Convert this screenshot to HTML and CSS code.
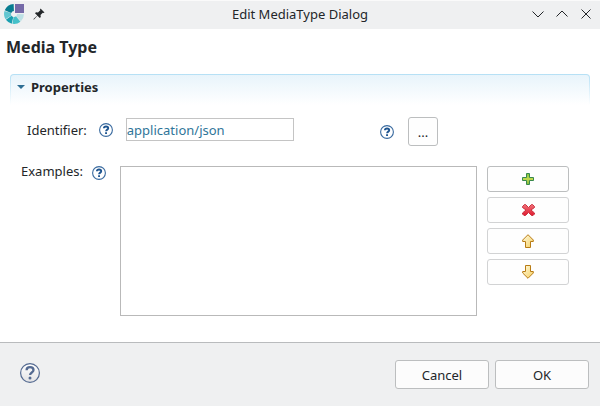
FILE: index.html
```html
<!DOCTYPE html>
<html lang="en">
<head>
<meta charset="utf-8">
<title>Edit MediaType Dialog</title>
<link rel="stylesheet" href="styles.css">
</head>
<body>
<svg class="defs" aria-hidden="true">
  <defs>
    <linearGradient id="green" x1="0" y1="0" x2="0" y2="1"><stop offset="0" stop-color="#7cc142"/><stop offset=".5" stop-color="#c3d94e"/><stop offset="1" stop-color="#7fb83c"/></linearGradient>
    <linearGradient id="red" x1="0" y1="0" x2="0" y2="1"><stop offset="0" stop-color="#f07078"/><stop offset="1" stop-color="#e01c30"/></linearGradient>
    <linearGradient id="gold" x1="0" y1="0" x2="1" y2="1"><stop offset="0" stop-color="#fffbe0"/><stop offset="1" stop-color="#f5cf62"/></linearGradient>
    <linearGradient id="disc" x1="0" y1="0" x2="0" y2="1"><stop offset="0" stop-color="#fff"/><stop offset="1" stop-color="#e2e2e4"/></linearGradient>
    <symbol id="help" viewBox="0 0 14 14">
      <circle cx="7" cy="7" r="6.4" fill="#fff" stroke="#396a9f" stroke-width="1.1"/>
      <path d="M4.9 5.2C5 3.9 6 3.5 7 3.5c1.300 0 2.200.7 2.200 1.700 0 1.500-2.100 1.400-2.100 3.100" fill="none" stroke="#1f5590" stroke-width="1.900"/>
      <path d="M6.100 9.300h1.900v1.800H6.100z" fill="#1f5590"/>
    </symbol>
  </defs>
</svg>
<div class="dialog">
  <header class="titlebar">
    <div class="title-left">
      <svg class="logo" width="22" height="22" viewBox="0 0 22 22" aria-hidden="true">
        <path d="M12 1h9v9h-9z" fill="#756aa8"/>
        <g fill="none" stroke-width="7">
          <path d="M17.500 11.200A6.500 6.500 0 0 1 15.500 15.700" stroke="#bce0e5"/>
          <path d="M15.200 16A6.500 6.500 0 0 1 10 17.400" stroke="#45c0c9"/>
          <path d="M9.500 17.300A6.500 6.500 0 0 1 5.700 14.800" stroke="#1a9fb0"/>
          <path d="M5.500 14.400A6.500 6.500 0 0 1 4.800 9" stroke="#62c6d1"/>
          <path d="M5 8.600A6.500 6.500 0 0 1 10.800 4.500" stroke="#087d91"/>
        </g>
      </svg>
      <svg width="12" height="12" viewBox="0 0 12 12" aria-hidden="true"><path d="M7.500.5l4 4-1 .5-.7-.2-2.300 2.300.3 2-1 1-2.400-2.400L1 11.500H.5V11l3.800-3.400L2 5.200l1-1 2 .3 2.300-2.300L7 1.500z" fill="#232629"/></svg>
    </div>
    <div class="title">Edit MediaType Dialog</div>
    <div class="window-buttons">
      <button aria-label="Minimize"><svg width="12" height="12" viewBox="0 0 12 12"><path d="M.5 3.500L6 9l5.500-5.500"/></svg></button>
      <button aria-label="Maximize"><svg width="12" height="12" viewBox="0 0 12 12"><path d="M.5 8.500L6 3l5.500 5.500"/></svg></button>
      <button aria-label="Close"><svg width="12" height="12" viewBox="0 0 12 12"><path d="M1.500 1.500l9 9M10.500 1.500l-9 9"/></svg></button>
    </div>
  </header>
  <main class="content">
    <h1>Media Type</h1>
    <section>
      <h2 class="section-head"><button class="toggle" aria-expanded="true"><svg width="8" height="4" viewBox="0 0 8 4" aria-hidden="true"><path d="M0 0h8L4 4z" fill="#2f6f94"/></svg>Properties</button></h2>
      <div class="row identifier">
        <div class="row entry">
          <label for="identifier">Identifier:</label>
          <svg class="help" role="img" aria-label="Help"><use href="#help"/></svg>
          <input id="identifier" type="text" value="application/json">
        </div>
        <svg class="help" role="img" aria-label="Help"><use href="#help"/></svg>
        <button class="button browse">...</button>
      </div>
      <div class="row examples">
        <label for="examples">Examples:</label>
        <svg class="help" role="img" aria-label="Help"><use href="#help"/></svg>
        <select id="examples" size="6"></select>
        <div class="actions">
          <button class="button" aria-label="Add"><svg width="12" height="12" viewBox="0 0 12 12"><path d="M4.500.5h3v4h4v3h-4v4h-3v-4h-4v-3h4z" fill="url(#green)" stroke="#38894d"/></svg></button>
          <button class="button muted" aria-label="Remove"><svg width="13" height="12" viewBox="0 0 13 12"><path d="M2.500.5h1l3 3 3-3h1l2 2v1L9 6l3.500 3v1l-1.500 1.500H9.500l-3-3-3 3H2L.5 10V9L4 6 .5 3.500v-1z" fill="url(#red)" stroke="#c93340"/></svg></button>
          <button class="button muted" aria-label="Move up"><svg width="12" height="14" viewBox="0 0 12 14"><path d="M6 .7L11.300 6v1.500H8.500v6h-5v-6H.7V6z" fill="url(#gold)" stroke="#b87b14"/></svg></button>
          <button class="button muted" aria-label="Move down"><svg width="12" height="14" viewBox="0 0 12 14"><path d="M6 13.300L.7 8V6.500h2.800v-6h5v6h2.800V8z" fill="url(#gold)" stroke="#b87b14"/></svg></button>
        </div>
      </div>
    </section>
  </main>
  <footer>
    <button class="footer-help" aria-label="Help"><svg width="20" height="20" viewBox="0 0 20 20"><circle cx="10" cy="10" r="9.400" fill="url(#disc)" stroke="#546a91" stroke-width="1.200"/><path d="M6.600 7.200C6.600 5 8 4.200 10 4.200c2.200 0 3.500 1.100 3.500 2.800 0 2.500-3.400 2.400-3.400 5" fill="none" stroke="#546a91" stroke-width="2.300"/><circle cx="10" cy="15" r="1.500" fill="#546a91"/></svg></button>
    <button class="button command">Cancel</button>
    <button class="button command">OK</button>
  </footer>
</div>
</body>
</html>
```
FILE: styles.css
```css
* {
  box-sizing: border-box;
}

body {
  margin: 0;
  background: #fff;
  color: #232629;
  font: 13px/18px "Noto Sans", sans-serif;
}

button,
input,
select {
  margin: 0;
  padding: 0;
  border: 0;
  background: none;
  color: inherit;
  font: inherit;
}

svg {
  display: block;
  flex: none;
}

.defs {
  position: absolute;
  width: 0;
  height: 0;
}

.dialog {
  display: flex;
  flex-direction: column;
  min-height: 100vh;
}

.titlebar {
  display: grid;
  grid-template-columns: 1fr auto 1fr;
  align-items: center;
  height: 29px;
  padding: 0 8px 2px;
  border-top: 1px solid #fafafa;
  background: #eff0f1;
}

.title-left {
  display: flex;
  align-items: center;
  gap: 8px;
  margin-left: -5px;
}

.window-buttons {
  display: flex;
  justify-content: flex-end;
  gap: 12px;
}

.window-buttons path {
  fill: none;
  stroke: #232629;
}

.content {
  flex: 1;
  padding: 8px 10px 26px;
}

h1 {
  margin: 0 -4px 17px;
  font-size: 16px;
  line-height: 20px;
}

.section-head {
  margin: 0 0 12px;
  padding: 3px 6px 9px;
  border: 1px solid transparent;
  border-bottom: 0;
  border-radius: 4px 4px 0 0;
  background:
    linear-gradient(#e8f4fb, #fff) padding-box,
    linear-gradient(#b5e0f5, #fff) border-box;
  font-size: 13px;
  line-height: 18px;
}

.toggle {
  display: flex;
  align-items: center;
  gap: 6px;
}

.row {
  display: flex;
}

.help {
  width: 14px;
  height: 14px;
  margin-left: 9px;
}

.identifier {
  align-items: center;
  margin-bottom: 20px;
  padding: 0 152px 0 17px;
}

.entry {
  flex: 1;
  align-items: center;
  padding-bottom: 4px;
}

.entry .help {
  margin-left: 12px;
}

input {
  width: 49%;
  height: 23px;
  margin-left: 13px;
  border: 1px solid #c4c4c4;
  background: #fff;
  color: #2f7599;
}

.button {
  display: flex;
  align-items: center;
  justify-content: center;
  border: 1px solid #bcbebf;
  border-radius: 3px;
  background: #fefefe;
}

.browse {
  width: 30px;
  height: 29px;
  margin-left: 14px;
}

.examples {
  align-items: flex-start;
  padding: 0 21px 0 11px;
}

.examples label {
  margin-top: -4px;
}

select {
  flex: 1;
  height: 150px;
  margin-left: 14px;
  border: 1px solid #b9b9b9;
  border-radius: 0;
  background: #fff;
}

.actions {
  display: grid;
  gap: 5px;
  width: 82px;
  margin-left: 10px;
}

.actions .button {
  height: 26px;
}

.muted {
  border-color: #d2d3d4;
}

footer {
  display: flex;
  align-items: center;
  gap: 6px;
  padding: 17px 11px 17px 20px;
  border-top: 1px solid #b9bbbd;
  background: #eff0f1;
}

.footer-help {
  margin: 0 auto 4px 0;
}

.command {
  width: 94px;
  height: 29px;
  background: #fcfcfc;
}
```
